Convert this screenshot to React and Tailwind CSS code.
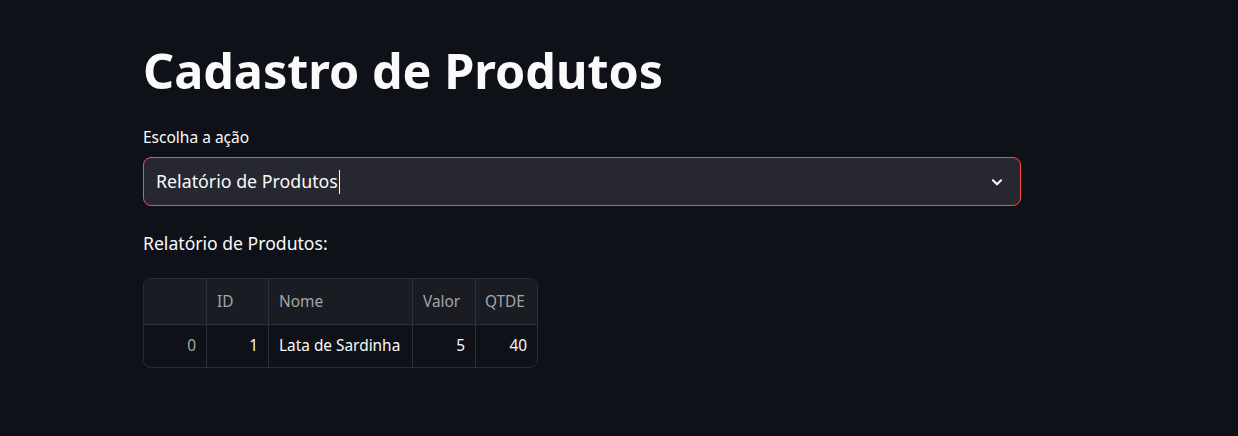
import React from "react";

export default function App() {
  const font = { fontFamily: '"Noto Sans", "Open Sans", sans-serif' };
  return (
    <div className="min-h-[436px] w-full bg-[#0e1117] text-[#fafafa]" style={font}>
      <div className="ml-[143px] w-[878px] pt-[38px]">
        <h1 className="text-[48.5px] font-bold leading-[64px]">Cadastro de Produtos</h1>
        <div className="mt-[23px] text-[15.5px] leading-[24px]">Escolha a ação</div>
        <div className="mt-[8px] flex h-[49px] items-center justify-between rounded-[8px] border border-[#ff4b4b] bg-[#262730] pl-[12px] pr-[16px]">
          <div className="flex items-center text-[17.8px]">
            <span>Relatório de Produtos</span>
            <span className="ml-[1px] inline-block h-[24px] w-[1px] bg-[#fafafa]" />
          </div>
          <svg width="14" height="14" viewBox="0 0 24 24" fill="none" stroke="#fafafa" strokeWidth="3.5" strokeLinecap="round" strokeLinejoin="round">
            <path d="M5 9l7 7 7-7" />
          </svg>
        </div>
        <div className="mt-[24px] text-[17.6px] leading-[26px]">Relatório de Produtos:</div>
        <div className="mt-[22px] w-[395px] overflow-hidden rounded-[8px] border border-[#2a2c34] text-[15.4px]">
          <div className="flex h-[45px] bg-[#1a1c24] text-[#a3a5aa]">
            <div className="w-[63px] border-r border-[#2e3038]" />
            <div className="flex w-[62px] items-center border-r border-[#2e3038] px-[10px]">ID</div>
            <div className="flex w-[144px] items-center border-r border-[#2e3038] px-[10px]">Nome</div>
            <div className="flex w-[63px] items-center border-r border-[#2e3038] px-[10px]">Valor</div>
            <div className="flex flex-1 items-center px-[9px]">QTDE</div>
          </div>
          <div className="flex h-[43px] border-t border-[#2e3038]">
            <div className="flex w-[63px] items-center justify-end border-r border-[#2e3038] px-[10px] text-[#a3a5aa]">0</div>
            <div className="flex w-[62px] items-center justify-end border-r border-[#2e3038] px-[10px]">1</div>
            <div className="flex w-[144px] items-center border-r border-[#2e3038] px-[10px]">Lata de Sardinha</div>
            <div className="flex w-[63px] items-center justify-end border-r border-[#2e3038] px-[10px]">5</div>
            <div className="flex flex-1 items-center justify-end px-[10px]">40</div>
          </div>
        </div>
      </div>
    </div>
  );
}
